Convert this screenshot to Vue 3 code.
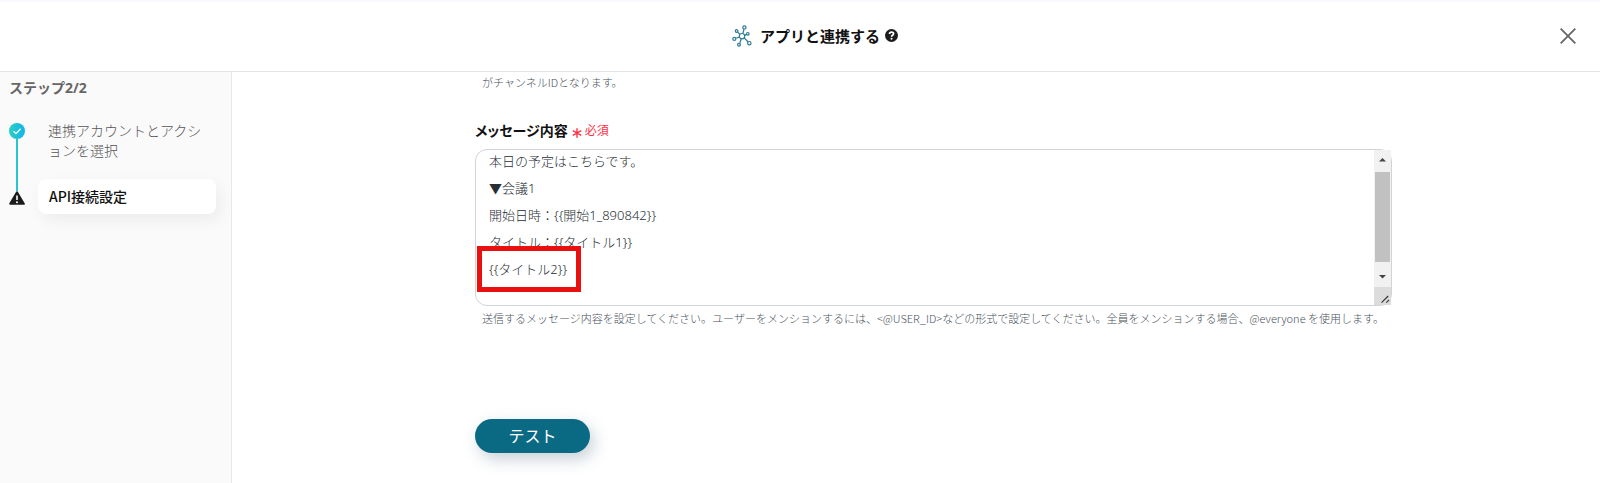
<script setup>
import { onMounted, ref } from 'vue'

const message = ref(
  '本日の予定はこちらです。\n▼会議1\n開始日時：{{開始1_890842}}\nタイトル：{{タイトル1}}\n{{タイトル2}}'
)
const box = ref(null)

onMounted(() => {
  box.value.scrollTop = 12
})
</script>

<template>
  <div class="page">
    <header class="header">
      <h1 class="title">
        <svg class="logo" viewBox="0 0 20 22" aria-hidden="true">
          <g fill="none" stroke="#2c7a93" stroke-width="1.2">
            <path d="M11 8.400 12 4M8 9.400 5.600 7M12.600 10.400 14.600 9.400M7.400 12 4 13.300M9.200 14 7.800 18M12.200 12.800 16.200 17" />
            <circle cx="10" cy="11.200" r="2.700" />
            <circle cx="12.400" cy="2.400" r="1.600" />
            <circle cx="4.600" cy="6" r="1.300" />
            <circle cx="15.800" cy="8.800" r="1.300" />
            <circle cx="2.300" cy="13.900" r="1.500" />
            <circle cx="7" cy="19.800" r="1.400" />
            <circle cx="17.300" cy="18.200" r="1.700" />
          </g>
        </svg>
        <span>アプリと連携する</span>
        <svg class="help" viewBox="0 0 13 13" aria-hidden="true">
          <circle cx="6.500" cy="6.500" r="6.500" fill="#1c1c1c" />
          <path d="M4.500 5C4.500 2.500 8.600 2.500 8.600 4.800 8.600 6.200 6.500 6.200 6.500 7.700" fill="none" stroke="#fff" stroke-width="1.700" />
          <circle cx="6.500" cy="9.800" r="1" fill="#fff" />
        </svg>
      </h1>
      <button class="close" type="button" aria-label="閉じる">
        <svg viewBox="0 0 16 16"><path d="M.7.7 15.300 15.300M15.300.7.7 15.300" stroke="#666" stroke-width="1.800" /></svg>
      </button>
    </header>

    <div class="body">
      <aside class="sidebar">
        <h2 class="step-title">ステップ2/2</h2>
        <div class="steps">
          <div class="rail">
            <svg class="done" viewBox="0 0 16 16" aria-hidden="true">
              <defs>
                <linearGradient id="doneFill" x1="0" y1="0" x2="1" y2="0">
                  <stop offset="0" stop-color="#2bcfc0" />
                  <stop offset="1" stop-color="#12b4ee" />
                </linearGradient>
              </defs>
              <circle cx="8" cy="8" r="8" fill="url(#doneFill)" />
              <path d="M4.500 8.200 7 10.600 11.600 5.800" fill="none" stroke="#fff" stroke-width="1.300" />
            </svg>
            <span class="line"></span>
            <svg class="warn" viewBox="0 0 16 14" aria-hidden="true">
              <path d="M8 1.200 14.800 12.800H1.200Z" fill="#1c1c1c" stroke="#1c1c1c" stroke-width="2" stroke-linejoin="round" />
              <path d="M8 4.500V9" stroke="#fff" stroke-width="1.600" />
              <circle cx="8" cy="11.200" r="1" fill="#fff" />
            </svg>
          </div>
          <div class="labels">
            <a class="step" href="#account">連携アカウントとアクションを選択</a>
            <a class="step current" href="#api">API接続設定</a>
          </div>
        </div>
      </aside>

      <main class="main">
        <p class="hint">がチャンネルIDとなります。</p>
        <div class="label-row">
          <label for="message">メッセージ内容</label>
          <svg class="star" viewBox="0 0 10 10" aria-hidden="true">
            <path d="M5 .3V9.700M.8 2.600 9.200 7.400M9.200 2.600.8 7.400" stroke="#ff3347" stroke-width="1.400" />
          </svg>
          <span class="required">必須</span>
        </div>
        <div class="field">
          <textarea id="message" ref="box" v-model="message" spellcheck="false"></textarea>
          <div class="scroll" aria-hidden="true">
            <svg class="arrow" viewBox="0 0 17 17"><path d="M5 11.500 8.500 8 12 11.500Z" fill="#444" /></svg>
            <span class="thumb"></span>
            <svg class="arrow" viewBox="0 0 17 17"><path d="M5 7 8.500 10.500 12 7Z" fill="#444" /></svg>
            <svg class="grip" viewBox="0 0 18 18"><path d="M8 16 15 9M13 16 16 13" stroke="#333" stroke-width="1.200" /></svg>
          </div>
          <span class="highlight"></span>
        </div>
        <p class="hint below">送信するメッセージ内容を設定してください。ユーザーをメンションするには、&lt;@USER_ID&gt;などの形式で設定してください。全員をメンションする場合、@everyone を使用します。</p>
        <button class="test" type="button">テスト</button>
      </main>
    </div>
  </div>
</template>

<style>
body {
  margin: 0;
}
</style>

<style scoped>
.page {
  min-height: 100vh;
  display: flex;
  flex-direction: column;
  box-sizing: border-box;
  border-top: 2px solid #f9f9ff;
  background: #fff;
  color: #111;
  font-family: "Noto Sans", "Noto Sans CJK JP", sans-serif;
  overflow: hidden;
}
h1, h2, p {
  margin: 0;
}
button, textarea {
  font-family: inherit;
}
.header {
  height: 69px;
  display: grid;
  grid-template-columns: 1fr auto 1fr;
  align-items: center;
  border-bottom: 1px solid #e4e4e4;
}
.title {
  grid-column: 2;
  display: flex;
  align-items: center;
  padding: 0 0 2px 30px;
  font-size: 15px;
  line-height: 22px;
  font-weight: 700;
}
.logo {
  width: 20px;
  height: 22px;
  margin-right: 8px;
}
.help {
  width: 13px;
  height: 13px;
  margin-left: 5px;
}
.close {
  justify-self: end;
  margin: 0 24px 2px 0;
  padding: 0;
  border: 0;
  background: none;
  display: flex;
}
.close svg {
  width: 16px;
  height: 16px;
}
.body {
  flex: 1;
  display: flex;
}
.sidebar {
  flex: 0 0 232px;
  box-sizing: border-box;
  border-right: 1px solid #e8e8e8;
  background: #fafafa;
  padding: 4px 15px 0 9px;
}
.step-title {
  font-size: 14px;
  line-height: 24px;
  font-weight: 700;
  color: #666;
}
.steps {
  display: flex;
  margin-top: 20px;
}
.rail {
  width: 16px;
  display: flex;
  flex-direction: column;
  align-items: center;
  padding: 3px 0 9px;
}
.done {
  width: 16px;
  height: 16px;
}
.line {
  flex: 1;
  width: 2px;
  background: #26c6cf;
}
.warn {
  width: 16px;
  height: 14px;
}
.labels {
  flex: 1;
  margin-left: 13px;
}
.step {
  display: block;
  padding: 0 11px 0 10px;
  font-family: "Noto Sans CJK JP", sans-serif;
  font-size: 14px;
  line-height: 20px;
  color: #555;
  font-weight: 300;
  text-decoration: none;
}
.step.current {
  margin-top: 19px;
  padding: 7px 11px 8px;
  border-radius: 8px;
  background: #fff;
  box-shadow: 4px 6px 16px rgba(0, 0, 0, 0.06);
  color: #111;
  font-weight: 500;
}
.main {
  flex: 1;
  min-width: 0;
  padding: 0 208px 0 243px;
}
.hint {
  padding-left: 7px;
  font-family: "Noto Sans CJK JP", sans-serif;
  font-size: 11px;
  line-height: 20px;
  color: #48525b;
  font-weight: 300;
  white-space: nowrap;
}
.hint.below {
  padding-top: 2px;
}
.label-row {
  display: flex;
  align-items: center;
  margin: 27px 0 6px;
  line-height: 24px;
}
.label-row label {
  font-size: 14px;
  font-weight: 700;
  font-feature-settings: "palt";
}
.star {
  width: 10px;
  height: 10px;
  margin: 4px 3px 0 4px;
}
.required {
  font-size: 12px;
  color: #ff3347;
}
.field {
  position: relative;
  display: flex;
}
textarea {
  width: 100%;
  height: 157px;
  box-sizing: border-box;
  padding: 10px 32px 32px 13px;
  border: 1px solid #ced4da;
  border-radius: 12px;
  background: #fff;
  color: #282e34;
  font-size: 13px;
  font-weight: 300;
  line-height: 27px;
  resize: none;
  overflow: hidden;
  outline: none;
}
.scroll {
  position: absolute;
  top: 1px;
  right: 1px;
  bottom: 1px;
  width: 17px;
  display: flex;
  flex-direction: column;
  background: #f1f1f1;
}
.arrow {
  width: 17px;
  height: 17px;
}
.thumb {
  flex: 1;
  margin: 5px 1px 6px;
  background: #c1c1c1;
}
.grip {
  width: 17px;
  height: 18px;
  margin-top: 2px;
  background: #dcdcdc;
}
.highlight {
  position: absolute;
  left: 2px;
  top: 97px;
  width: 104px;
  height: 46px;
  box-sizing: border-box;
  border: 5px solid #ea1010;
}
.test {
  display: block;
  margin-top: 91px;
  width: 115px;
  height: 34px;
  padding: 0 0 2px;
  border: 0;
  border-radius: 17px;
  background: #0a6a84;
  box-shadow: 4px 6px 16px rgba(40, 70, 100, 0.25);
  color: #fff;
  font-size: 16px;
}
</style>
